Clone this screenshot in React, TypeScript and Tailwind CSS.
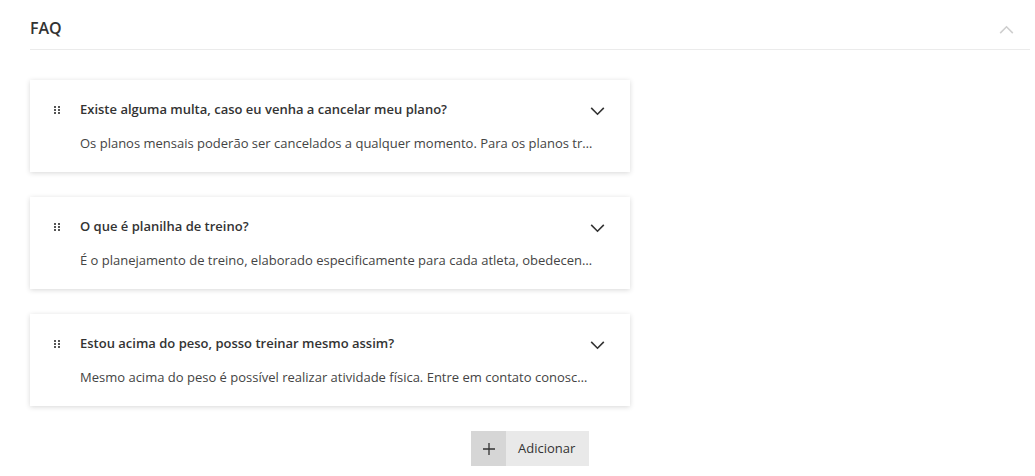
import React from "react";

const faqs = [
  {
    q: "Existe alguma multa, caso eu venha a cancelar meu plano?",
    a: "Os planos mensais poderão ser cancelados a qualquer momento. Para os planos trimestrais, semestrais e anuais será cobrada multa proporcional.",
  },
  {
    q: "O que é planilha de treino?",
    a: "É o planejamento de treino, elaborado especificamente para cada atleta, obedecendo seus objetivos e disponibilidade.",
  },
  {
    q: "Estou acima do peso, posso treinar mesmo assim?",
    a: "Mesmo acima do peso é possível realizar atividade física. Entre em contato conosco para avaliarmos o seu caso.",
  },
];

function DragHandle() {
  return (
    <svg width="6" height="8" viewBox="0 0 6 8" fill="#555">
      <rect x="0" y="0" width="2" height="2" />
      <rect x="4" y="0" width="2" height="2" />
      <rect x="0" y="3" width="2" height="2" />
      <rect x="4" y="3" width="2" height="2" />
      <rect x="0" y="6" width="2" height="2" />
      <rect x="4" y="6" width="2" height="2" />
    </svg>
  );
}

function Chevron({ up, color, w = 16 }: { up?: boolean; color: string; w?: number }) {
  return (
    <svg width={w} height={w * 0.6} viewBox="0 0 16 10" fill="none" stroke={color} strokeWidth="1.8">
      {up ? <path d="M1 9l7-7 7 7" /> : <path d="M1 1l7 7 7-7" />}
    </svg>
  );
}

export default function App() {
  return (
    <div className="w-[1035px] h-[476px] bg-white pl-[30px] pr-[5px] font-['Open_Sans',sans-serif] text-[#333]">
      {/* Header */}
      <div className="h-[50px] flex items-center justify-between border-b border-[#ebebeb] pt-[7px]">
        <span className="text-[16px] font-semibold text-[#333]">FAQ</span>
        <div className="mr-[16px] mt-[2px]">
          <Chevron up color="#cfcfcf" w={15} />
        </div>
      </div>

      {/* Cards */}
      <div className="mt-[30px] flex flex-col gap-[25px] w-[600px]">
        {faqs.map((f, i) => (
          <div
            key={i}
            className="bg-white shadow-[0_1px_5px_rgba(0,0,0,0.16)] pl-[24px] pr-[25px] pt-[20px] pb-[20px] flex"
          >
            <div className="w-[26px] pt-[6px] shrink-0">
              <DragHandle />
            </div>
            <div className="flex-1 min-w-0">
              <div className="h-[18px] flex items-center justify-between">
                <span className="text-[13px] font-semibold leading-[18px] text-[#333]">{f.q}</span>
                <div className="mt-[4px]">
                  <Chevron color="#333" w={15} />
                </div>
              </div>
              <div className="mt-[16px] pr-[12px] text-[13px] leading-[18px] text-[#444] truncate">
                {f.a}
              </div>
            </div>
          </div>
        ))}
      </div>

      {/* Add button */}
      <div className="mt-[25px] pl-[441px]">
        <button className="flex h-[35px] w-[118px] bg-[#e9e9e9] text-[13px] text-[#333]">
          <span className="w-[35px] h-full bg-[#d6d6d6] flex items-center justify-center">
            <svg width="12" height="12" viewBox="0 0 12 12" stroke="#333" strokeWidth="1.3">
              <path d="M6 0v12M0 6h12" />
            </svg>
          </span>
          <span className="flex-1 flex items-center pl-[12px]">Adicionar</span>
        </button>
      </div>
    </div>
  );
}
